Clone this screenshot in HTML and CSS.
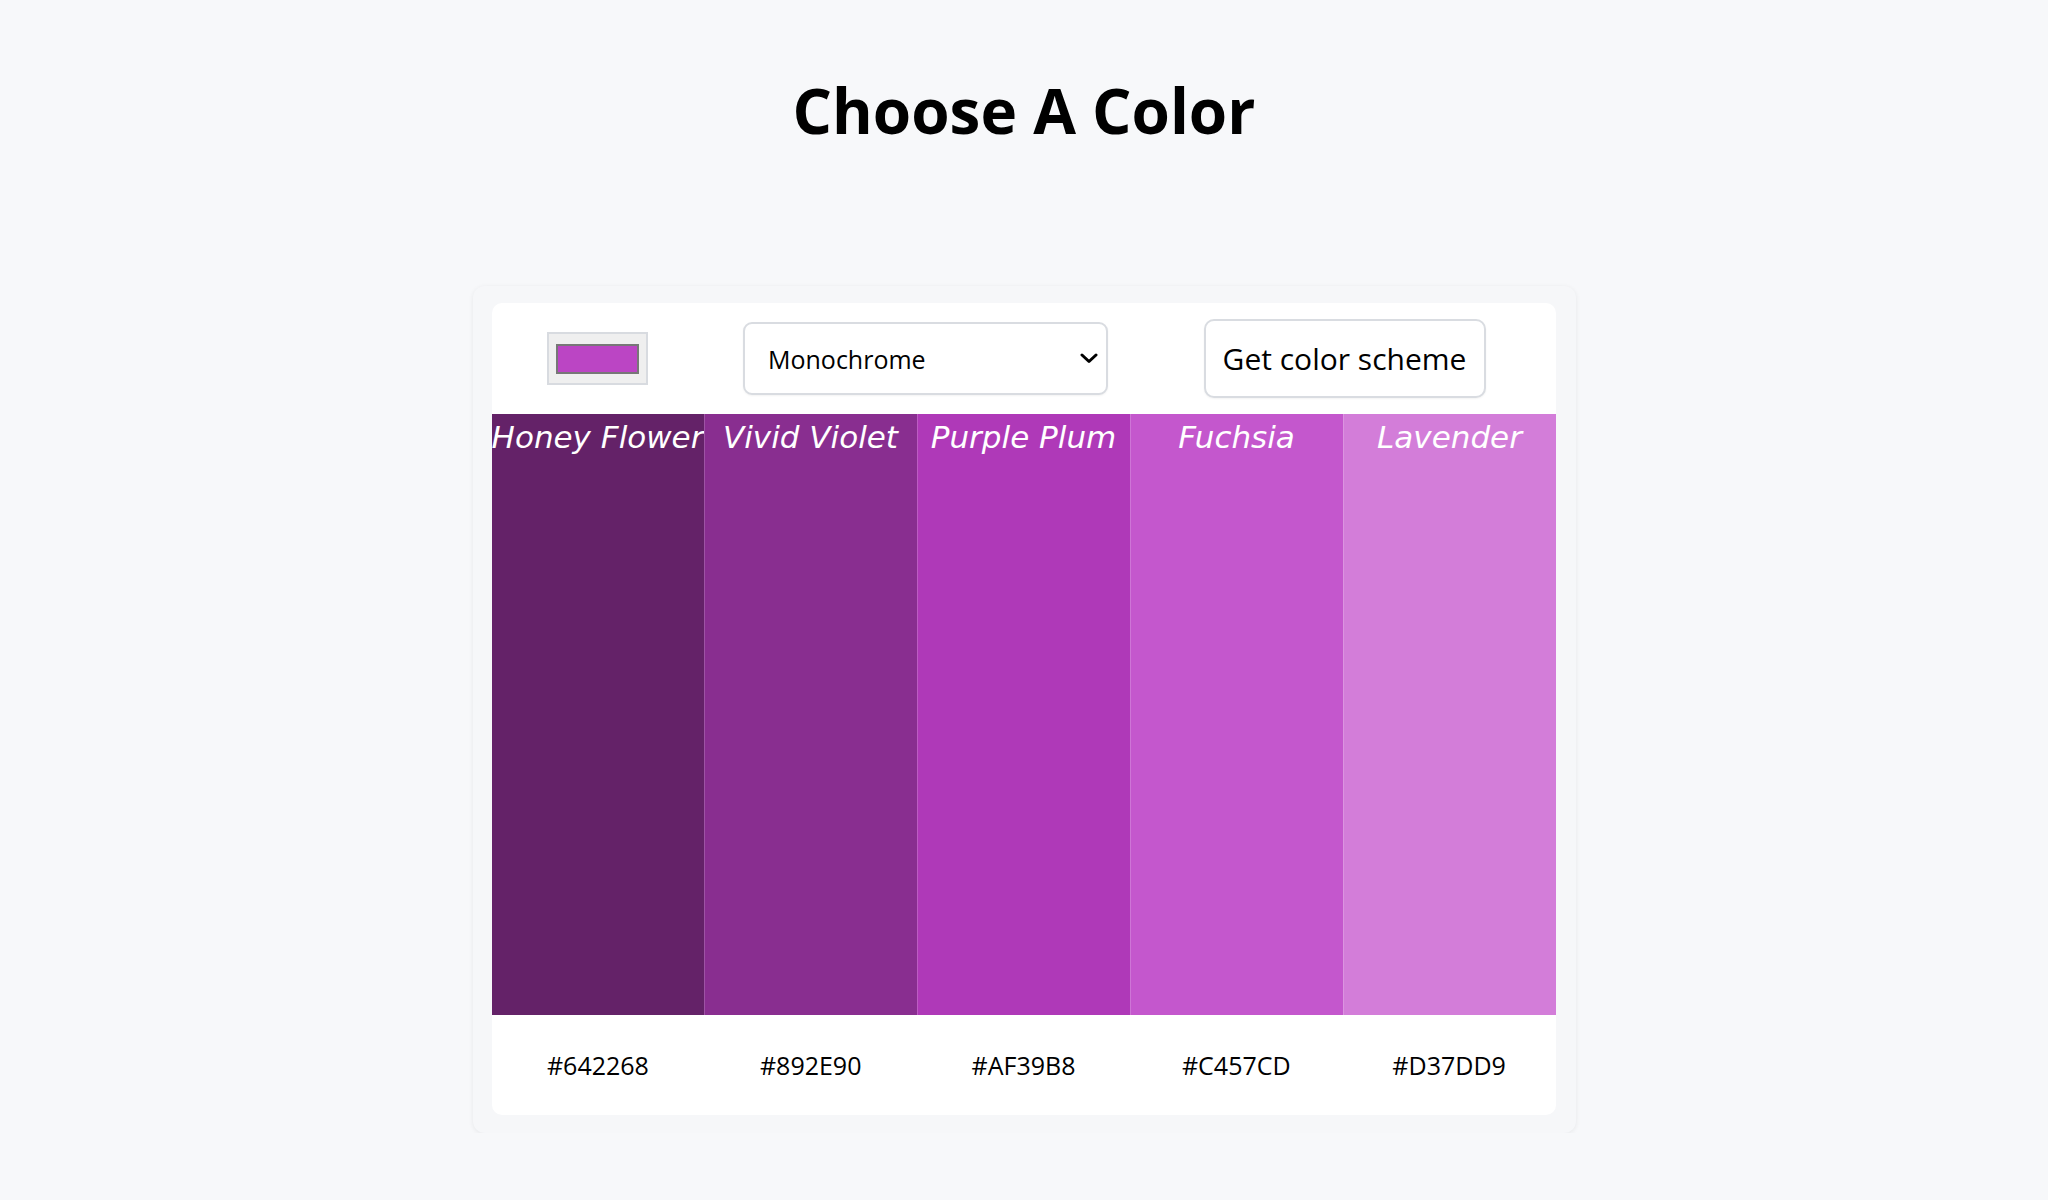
FILE: index.html
```html
<!DOCTYPE html>
<html lang="en">
<head>
<meta charset="utf-8">
<title>Choose A Color</title>
<link rel="stylesheet" href="styles.css">
</head>
<body>
<h1 class="title">Choose A Color</h1>
<main class="card">
  <div class="panel">
    <form class="controls">
      <input class="picker" type="color" value="#bb45c4">
      <div class="select-wrap">
        <select class="mode">
          <option>Monochrome</option>
          <option>Monochrome-dark</option>
          <option>Monochrome-light</option>
          <option>Analogic</option>
          <option>Complement</option>
          <option>Analogic-complement</option>
          <option>Triad</option>
          <option>Quad</option>
        </select>
        <svg class="chevron" width="18" height="11" viewBox="0 0 18 11"><path d="M2 2 L9 8.5 L16 2" fill="none" stroke="#000" stroke-width="3" stroke-linecap="round" stroke-linejoin="round"/></svg>
      </div>
      <button class="get" type="button">Get color scheme</button>
    </form>
    <div class="strip">
      <div class="swatch" style="background:#642268"><span class="name">Honey Flower</span></div>
      <div class="swatch" style="background:#892E90"><span class="name">Vivid Violet</span></div>
      <div class="swatch" style="background:#AF39B8"><span class="name">Purple Plum</span></div>
      <div class="swatch" style="background:#C457CD"><span class="name">Fuchsia</span></div>
      <div class="swatch" style="background:#D37DD9"><span class="name">Lavender</span></div>
    </div>
    <div class="codes">
      <div class="code">#642268</div>
      <div class="code">#892E90</div>
      <div class="code">#AF39B8</div>
      <div class="code">#C457CD</div>
      <div class="code">#D37DD9</div>
    </div>
  </div>
</main>
</body>
</html>
```

FILE: styles.css
```css
* { box-sizing: border-box; }

body {
  margin: 0;
  background: #f7f8fa;
  font-family: "Open Sans", "Noto Sans", sans-serif;
  color: #000;
}

.title {
  margin: 67px 0 0;
  text-align: center;
  font-size: 62px;
  font-weight: 700;
  line-height: 87px;
}

.card {
  width: 1103px;
  margin: 132px auto 0;
  padding: 17px 20px 18px 19px;
  background: #f6f7f9;
  border-radius: 12px;
  box-shadow: 0 1px 5px rgba(0, 0, 0, 0.07);
}

.panel {
  background: #fff;
  border-radius: 10px;
  overflow: hidden;
}

.controls {
  height: 111px;
  display: flex;
  align-items: center;
  justify-content: space-between;
  padding: 0 70px 0 55px;
  margin: 0;
}

.picker {
  -webkit-appearance: none;
  appearance: none;
  width: 101px;
  height: 53px;
  padding: 10px 7px 9px 7px;
  border: 2px solid #d8dbe0;
  background: #efefef;
  margin: 0;
  cursor: pointer;
}
.picker::-webkit-color-swatch-wrapper { padding: 0; }
.picker::-webkit-color-swatch { border: 2px solid #777; border-radius: 0; }

.select-wrap {
  position: relative;
  width: 365px;
  height: 73px;
}

.mode {
  -webkit-appearance: none;
  appearance: none;
  width: 100%;
  height: 100%;
  padding: 0 40px 0 23px;
  border: 2px solid #d9dce1;
  border-radius: 9px;
  background: #fff;
  font-family: "Open Sans", "Noto Sans", sans-serif;
  font-size: 25px;
  color: #000;
  box-shadow: 0 1px 2px rgba(0, 0, 0, 0.05);
}

.chevron {
  position: absolute;
  right: 10px;
  top: 31px;
  pointer-events: none;
}

.get {
  width: 282px;
  height: 79px;
  border: 2px solid #d9dce1;
  border-radius: 10px;
  background: #fff;
  font-family: "Open Sans", "Noto Sans", sans-serif;
  font-size: 30px;
  color: #000;
  padding: 0;
  box-shadow: 0 1px 2px rgba(0, 0, 0, 0.05);
}

.strip {
  display: flex;
  height: 601px;
}

.swatch {
  flex: 1 1 0;
  min-width: 0;
  display: flex;
  justify-content: center;
  border-left: 1px solid rgba(255, 255, 255, 0.18);
}
.swatch:first-child { border-left: none; }

.name {
  font-family: "DejaVu Sans", sans-serif;
  font-style: italic;
  font-size: 31px;
  line-height: 46px;
  color: #fff;
  white-space: nowrap;
}

.codes {
  display: flex;
  height: 100px;
  align-items: center;
}

.code {
  flex: 1 1 0;
  text-align: center;
  font-size: 25px;
  color: #000;
}
```
